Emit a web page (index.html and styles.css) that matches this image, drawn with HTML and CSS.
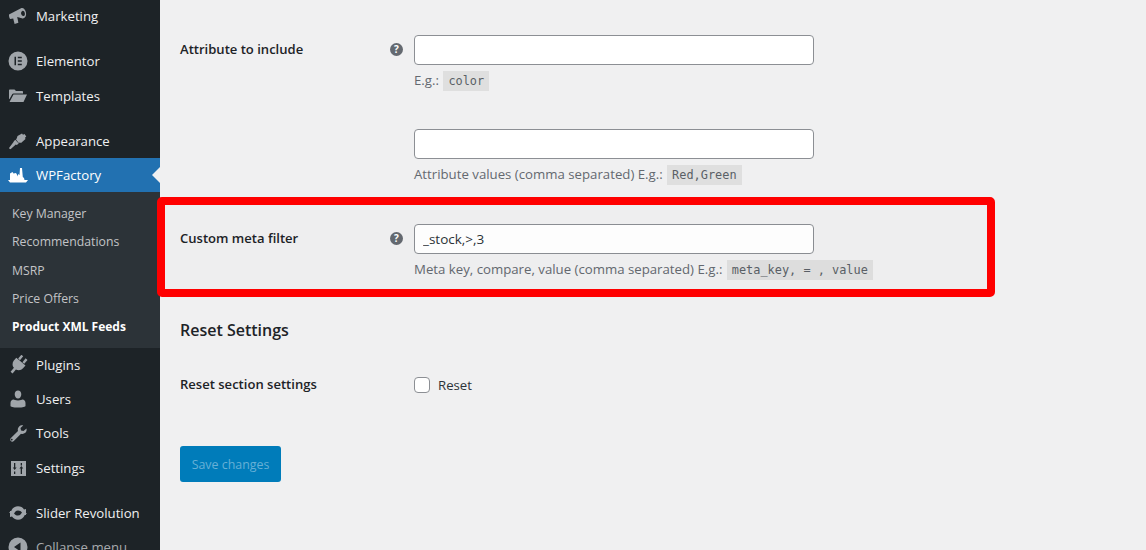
FILE: index.html
```html
<!DOCTYPE html>
<html lang="en">
<head>
<meta charset="utf-8">
<title>Product XML Feeds</title>
<link rel="stylesheet" href="styles.css">
</head>
<body>
<div class="page">
  <nav class="sidebar">
    <ul class="menu">
      <li class="item"><svg class="ico" viewBox="0 0 20 20"><path fill-rule="evenodd" d="M1 8.500 13 2.300c1-.5 2.200-.3 3 .5 1.400 1.400 2.200 3.400 2.100 5.500-.1 1.600-.8 3-1.900 3.800-.8.500-1.700.5-2.400.2L9.200 11l1.200 5.800L6.600 18 5.200 12.500l-3 .6C1.400 12 .8 10 1 8.500Zm13.400-3.600c-1.100.3-1.600 1.800-1.200 3.200.4 1.300 1.500 2.200 2.500 1.900 1-.3 1.500-1.700 1.100-3.100-.4-1.400-1.400-2.300-2.400-2Z"/></svg><span>Marketing</span></li>
      <li class="item gap-before"><svg class="ico" viewBox="0 0 20 20"><path fill-rule="evenodd" d="M10 .500a9.500 9.500 0 1 0 0 19 9.500 9.500 0 0 0 0-19ZM6.500 5.800H8v8.400H6.500V5.800Zm3.300 0h4v1.500h-4V5.800Zm0 3.400h4v1.500h-4V9.200Zm0 3.500h4v1.500h-4v-1.500Z"/></svg><span>Elementor</span></li>
      <li class="item nudge"><svg class="ico" viewBox="0 0 20 20"><path d="M1 4.500c0-.6.400-1 1-1h4.500L8 5h6c.6 0 1 .4 1 1v1.500H5.500c-.6 0-1 .3-1.300.8L1.500 13H1V4.500Zm4.500 4H19L15.500 16H1.500l4-7.500Z"/></svg><span>Templates</span></li>
      <li class="item gap-before"><svg class="ico" viewBox="0 0 20 20"><path d="M9.500 5 14 2.500l1 1.200 1.500-.7 1.800 2.500-1.300 1.200.5 1.300-4.500 4-1-.6-1.200.6-2.800-3.500.8-1.200L9.500 5ZM7.300 8.800l3.400 3.700-1.900 1.500-1-.4L2.800 18c-.8.500-1.800-.2-1.600-1.200l4.500-6 .1-.6 1.500-1.400Z"/></svg><span>Appearance</span></li>
      <li class="item current"><svg class="ico" viewBox="0 0 20 20"><path d="M0 15h2V8.500l2.500-1.500 1 1.500L8 8l1.500 2.500.5 1V9l1.500 1L12 3h2l.8 9 1.200 1 .5 2H20l-2 2.500H2L0 15Z"/></svg><span>WPFactory</span></li>
      <li class="sub">
        <ul class="submenu">
          <li class="sub-item">Key Manager</li>
          <li class="sub-item">Recommendations</li>
          <li class="sub-item">MSRP</li>
          <li class="sub-item">Price Offers</li>
          <li class="sub-item active">Product XML Feeds</li>
        </ul>
      </li>
      <li class="item"><svg class="ico" viewBox="0 0 20 20"><g transform="rotate(40 10 10)"><path d="M6 0h2.400v5H6V0Zm5.600 0H14v5h-2.400V0ZM4 5.500h12v3.800c0 2.800-2 5-4.700 5.500V20H8.700v-5.200C6 14.300 4 12.100 4 9.300V5.500Z"/></g></svg><span>Plugins</span></li>
      <li class="item"><svg class="ico" viewBox="0 0 20 20"><path d="M10 1.500c2 0 3.300 1.700 3.300 3.700S12 9.500 10 9.500 6.700 7.200 6.700 5.200 8 1.500 10 1.500ZM5.500 10.500c1 0 1.500 1 4.500 1s3.500-1 4.500-1c1.500 0 3 1.500 3 3.500v3c0 .8-2.500 1.500-7.500 1.500S2.500 17.800 2.500 17v-3c0-2 1.500-3.500 3-3.500Z"/></svg><span>Users</span></li>
      <li class="item"><svg class="ico" viewBox="0 0 20 20"><path fill-rule="evenodd" d="M18.500 5.500c.4 1.600 0 3.200-1.200 4.300-1.200 1.100-2.800 1.400-4.300.9L5.800 18c-.9.900-2.200.9-3 .1-.8-.9-.8-2.200.1-3L10 8c-.5-1.500-.2-3.100 1-4.300 1.100-1.100 2.700-1.600 4.200-1.200L12.500 5l.5 2.500 2.500.5 3-2.500ZM4 15.700a.9.900 0 1 0 .1 1.700.9.900 0 0 0-.1-1.700Z"/></svg><span>Tools</span></li>
      <li class="item nudge"><svg class="ico" viewBox="0 0 20 20"><path fill-rule="evenodd" d="M3 3h15v15H3V3Zm3 2v4.500H4.800L6.700 12l1.900-2.500H7.300V5H6Zm0 8.500V16h1.300v-2.500H6Zm6.700-8.500v2.500H14V5h-1.300Zm.6 3-1.900 2.500h1.300V16H14v-5.500h1.300L13.300 8Z"/></svg><span>Settings</span></li>
      <li class="item gap-before"><svg class="ico" viewBox="0 0 20 20"><path d="M1 9.500 3.200 8C4.400 5 7 3.300 10 3.300c2.600 0 4.800 1.200 6 3.200l2-.5v6h-5.800l1.800-2.300c-.8-1.400-2.300-2.300-4-2.300-1.600 0-3 .8-3.700 2L4 11 1 9.500Z"/><path d="M19 10.500 16.800 12c-1.200 3-3.800 4.700-6.800 4.700-2.600 0-4.800-1.200-6-3.200l-2 .5V8h5.800L6 10.300c.8 1.400 2.300 2.300 4 2.300 1.600 0 3-.8 3.700-2L16 9l3 1.500Z"/></svg><span>Slider Revolution</span></li>
      <li class="item collapse"><svg class="ico" viewBox="0 0 20 20"><path fill-rule="evenodd" d="M10 .500a9.500 9.500 0 1 0 0 19 9.500 9.500 0 0 0 0-19Zm2.500 5v9L6 10l6.500-4.500Z"/></svg><span>Collapse menu</span></li>
    </ul>
  </nav>

  <main class="content">
    <section class="row">
      <div class="label">Attribute to include</div>
      <div class="help">?</div>
      <div class="field">
        <input class="text" type="text">
        <p class="hint">E.g.: <code>color</code></p>
      </div>
    </section>
    <section class="row second">
      <div class="label"></div>
      <div></div>
      <div class="field">
        <input class="text" type="text">
        <p class="hint">Attribute values (comma separated) E.g.: <code>Red,Green</code></p>
      </div>
    </section>
    <section class="row third">
      <div class="label">Custom meta filter</div>
      <div class="help">?</div>
      <div class="field">
        <input class="text" type="text" value="_stock,&gt;,3">
        <p class="hint">Meta key, compare, value (comma separated) E.g.: <code>meta_key, = , value</code></p>
      </div>
    </section>
    <h2 class="heading">Reset Settings</h2>
    <section class="row reset">
      <div class="label">Reset section settings</div>
      <div></div>
      <label class="check"><input type="checkbox" class="box"><span>Reset</span></label>
    </section>
    <button class="save" type="button">Save changes</button>
  </main>
</div>
<div class="highlight"></div>
</body>
</html>
```
FILE: styles.css
```css
* { box-sizing: border-box; }
html, body { margin: 0; height: 100%; overflow: hidden; }
body { background: #f0f0f1; font-family: "Open Sans", "Noto Sans", sans-serif; font-size: 13.200px; color: #1d2327; }
ul { list-style: none; margin: 0; padding: 0; }
.page { display: flex; height: 550px; overflow: hidden; }
.sidebar { width: 160px; flex: none; background: #1d2327; height: 550px; overflow: hidden; }
.menu { margin-top: -1px; }
.item { display: flex; align-items: center; gap: 8px; height: 34px; padding-left: 8px; color: #f0f0f1; line-height: 18px; white-space: nowrap; }
.item .ico { width: 20px; height: 20px; fill: #a0a5aa; flex: none; }
.gap-before { margin-top: 11px; }
.nudge { margin-top: 1px; }
.current { position: relative; background: #2271b1; color: #fff; }
.current .ico { fill: #fff; }
.current::after { content: ""; position: absolute; right: 0; top: 9px; border: 8px solid transparent; border-left-width: 0; border-right-color: #f0f0f1; }
.sub { background: #2c3338; padding: 8.100px 0 0; height: 156px; }
.sub-item { height: 28.250px; line-height: 28px; padding-left: 12px; font-size: 12.250px; color: #c3c4c7; white-space: nowrap; }
.sub-item.active { color: #fff; font-weight: 700; font-size: 12px; }
.collapse { color: #a7aaad; }

.content { flex: 1; padding: 35px 0 0 20px; min-width: 0; }
.row { display: grid; grid-template-columns: 210px 24px 400px; align-items: start; }
.second { margin-top: 39px; }
.third { margin-top: 40px; }
.label { font-size: 13.050px; font-weight: 600; line-height: 20px; padding-top: 4px; }
.help { width: 13px; height: 13px; margin-top: 7.500px; border-radius: 50%; background: #646970; color: #fff; font-size: 10px; font-weight: 700; line-height: 13px; text-align: center; }
.text { display: block; width: 400px; height: 30px; margin: 0; padding: 0 8px; background: #fff; border: 1px solid #8c8f94; border-radius: 4px; font: 13.500px/28px "Open Sans", "Noto Sans", sans-serif; color: #2c3338; }
.hint { margin: 5px 0 0; height: 20px; line-height: 20px; font-size: 13.220px; color: #646970; white-space: nowrap; }
code { display: inline-block; height: 20px; padding: 0 5px; margin-left: 1px; background: #dfdfdf; font: 11.900px/20px "DejaVu Sans Mono", monospace; color: #5a5f66; }
.heading { margin: 39px 0 0; font-size: 16px; font-weight: 600; line-height: 24px; color: #1d2327; }
.reset { margin-top: 30px; }
.reset .label { padding-top: 2px; }
.check { display: flex; align-items: center; gap: 8px; height: 24px; margin-top: 1px; }
.box { appearance: none; -webkit-appearance: none; width: 16px; height: 16px; margin: 0; background: #fff; border: 1px solid #8c8f94; border-radius: 4px; }
.check span { color: #2c3338; }
.save { display: block; width: 101px; height: 36px; margin: 49px 0 0; padding: 0; background: #007cba; color: #66b0d6; border: 0; border-radius: 3px; font: 12.400px "Open Sans", "Noto Sans", sans-serif; }
.highlight { position: absolute; left: 157px; top: 197px; width: 838px; height: 100px; border: 8px solid #f00; border-radius: 5px; background: rgba(0, 0, 0, .008); }
```
